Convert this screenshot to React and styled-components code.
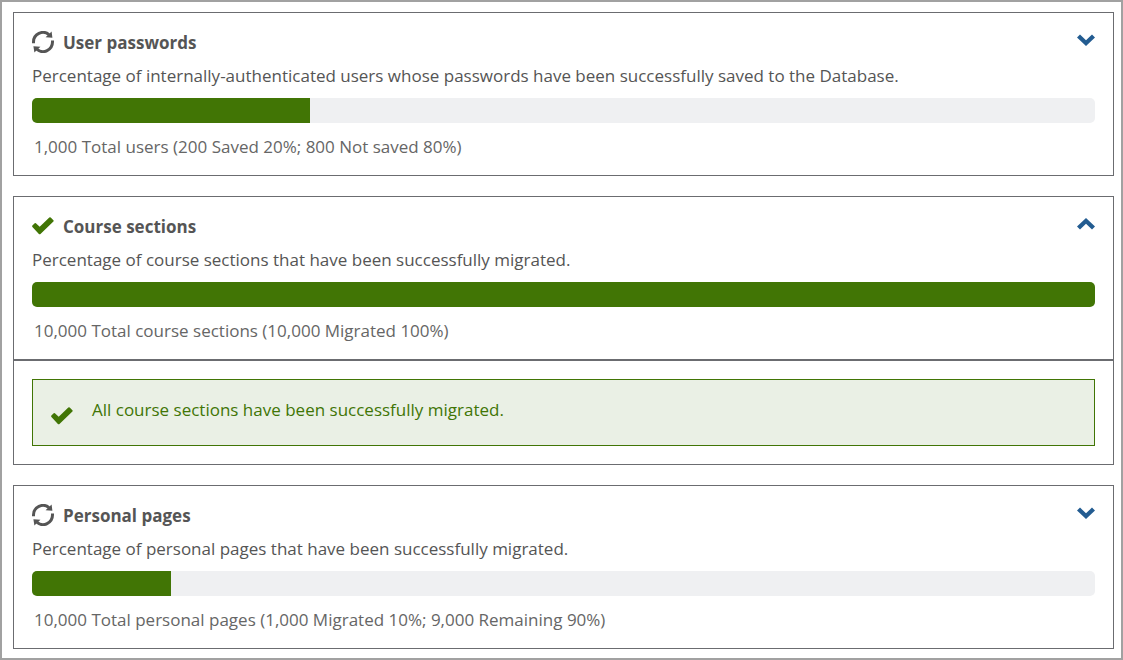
import { useState } from "react";
import styled, { createGlobalStyle } from "styled-components";

const tasks = [
  {
    id: "passwords",
    title: "User passwords",
    description:
      "Percentage of internally-authenticated users whose passwords have been successfully saved to the Database.",
    summary: "1,000 Total users (200 Saved 20%; 800 Not saved 80%)",
    fill: 26.15,
  },
  {
    id: "sections",
    title: "Course sections",
    description:
      "Percentage of course sections that have been successfully migrated.",
    summary: "10,000 Total course sections (10,000 Migrated 100%)",
    fill: 100,
    message: "All course sections have been successfully migrated.",
  },
  {
    id: "pages",
    title: "Personal pages",
    description:
      "Percentage of personal pages that have been successfully migrated.",
    summary:
      "10,000 Total personal pages (1,000 Migrated 10%; 9,000 Remaining 90%)",
    fill: 13.1,
  },
];

const SyncIcon = () => (
  <Icon viewBox="0 0 22 22" aria-hidden="true">
    <path
      d="M1.5 12.2V11A9.5 9.5 0 0 1 17 3.6M20.5 9.4V11A9.5 9.5 0 0 1 5 18.4"
      fill="none"
      stroke="#555"
      strokeWidth="3"
    />
    <path d="M19.6.4 20.4 6.8 13.6 6.2ZM2.4 21.6 1.4 15.2 8.4 15.8Z" fill="#555" />
  </Icon>
);

const CheckIcon = () => (
  <Icon viewBox="0 0 22 22" aria-hidden="true">
    <path
      d="M.4 10.6 2.7 8.2Q3.3 7.7 3.9 8.2L7.7 11.8 17.3 2.6Q18 2 18.7 2.6L21.4 5.3Q22 5.9 21.4 6.5L8.5 18.9Q7.7 19.5 6.9 18.9L.4 11.9Q-.2 11.2.4 10.6Z"
      fill="#417505"
    />
  </Icon>
);

const MigrationTask = ({ task }) => {
  const [isOpen, setIsOpen] = useState(Boolean(task.message));

  return (
    <section>
      <Card>
        <CardHeader>
          {task.fill === 100 ? <CheckIcon /> : <SyncIcon />}
          <Title id={task.id}>{task.title}</Title>
          <ToggleButton
            type="button"
            aria-label={`Toggle ${task.title}`}
            aria-expanded={isOpen}
            onClick={() => setIsOpen(!isOpen)}
          >
            <Chevron viewBox="0 0 18 12" $up={isOpen} aria-hidden="true">
              <path d="M0 3.6 3 .6 9 6.2 15 .6 18 3.6 9 12Z" fill="#235c91" />
            </Chevron>
          </ToggleButton>
        </CardHeader>
        <Description>{task.description}</Description>
        <Track
          role="progressbar"
          aria-labelledby={task.id}
          aria-valuenow={task.fill}
        >
          <Fill style={{ width: `${task.fill}%` }} />
        </Track>
        <Summary>{task.summary}</Summary>
      </Card>
      {isOpen && task.message && (
        <Details>
          <Alert>
            <CheckIcon />
            <AlertText>{task.message}</AlertText>
          </Alert>
        </Details>
      )}
    </section>
  );
};

export default function App() {
  return (
    <>
      <GlobalStyle />
      <Frame>
        {tasks.map((task) => (
          <MigrationTask key={task.id} task={task} />
        ))}
      </Frame>
    </>
  );
}

const GlobalStyle = createGlobalStyle`
  * {
    box-sizing: border-box;
  }

  body {
    margin: 0;
    background: #fff;
    color: #555;
    font-family: "Open Sans", sans-serif;
    font-size: 17px;
    line-height: 24px;
  }
`;

const Frame = styled.main`
  display: flex;
  flex-direction: column;
  gap: 20px;
  min-height: 100vh;
  padding: 10px 7px 9px 11px;
  border: 2px solid #a1a1a1;
`;

const Card = styled.div`
  padding: 18px 18px 16px;
  border: 1px solid #6b6c70;
`;

const CardHeader = styled.div`
  display: flex;
  align-items: flex-start;
  gap: 9px;
`;

const Icon = styled.svg`
  flex: none;
  width: 22px;
  height: 22px;
`;

const Title = styled.h2`
  flex: 1;
  margin: 0;
  font-size: 17px;
  font-weight: 700;
`;

// Expand / collapse control
const ToggleButton = styled.button`
  display: flex;
  padding: 3px 0;
  border: none;
  background: none;
  cursor: pointer;
`;

const Chevron = styled.svg`
  width: 18px;
  height: 12px;
  transform: ${({ $up }) => ($up ? "rotate(180deg)" : "none")};
`;

const Description = styled.p`
  margin: 9px 0 10px;
`;

// Progress bar
const Track = styled.div`
  height: 25px;
  border-radius: 5px;
  overflow: hidden;
  background: #eff0f2;
`;

const Fill = styled.div`
  height: 100%;
  background: #417505;
`;

const Summary = styled.p`
  margin: 12px 0 0;
  padding-left: 2px;
  color: #666;
`;

const Details = styled.div`
  padding: 18px;
  border: 1px solid #6b6c70;
`;

const Alert = styled.div`
  display: flex;
  align-items: flex-end;
  gap: 19px;
  padding: 18px;
  border: 1px solid #417505;
  background: #eaf0e5;
`;

const AlertText = styled.p`
  margin: 0;
  padding-bottom: 5px;
  color: #417505;
`;
